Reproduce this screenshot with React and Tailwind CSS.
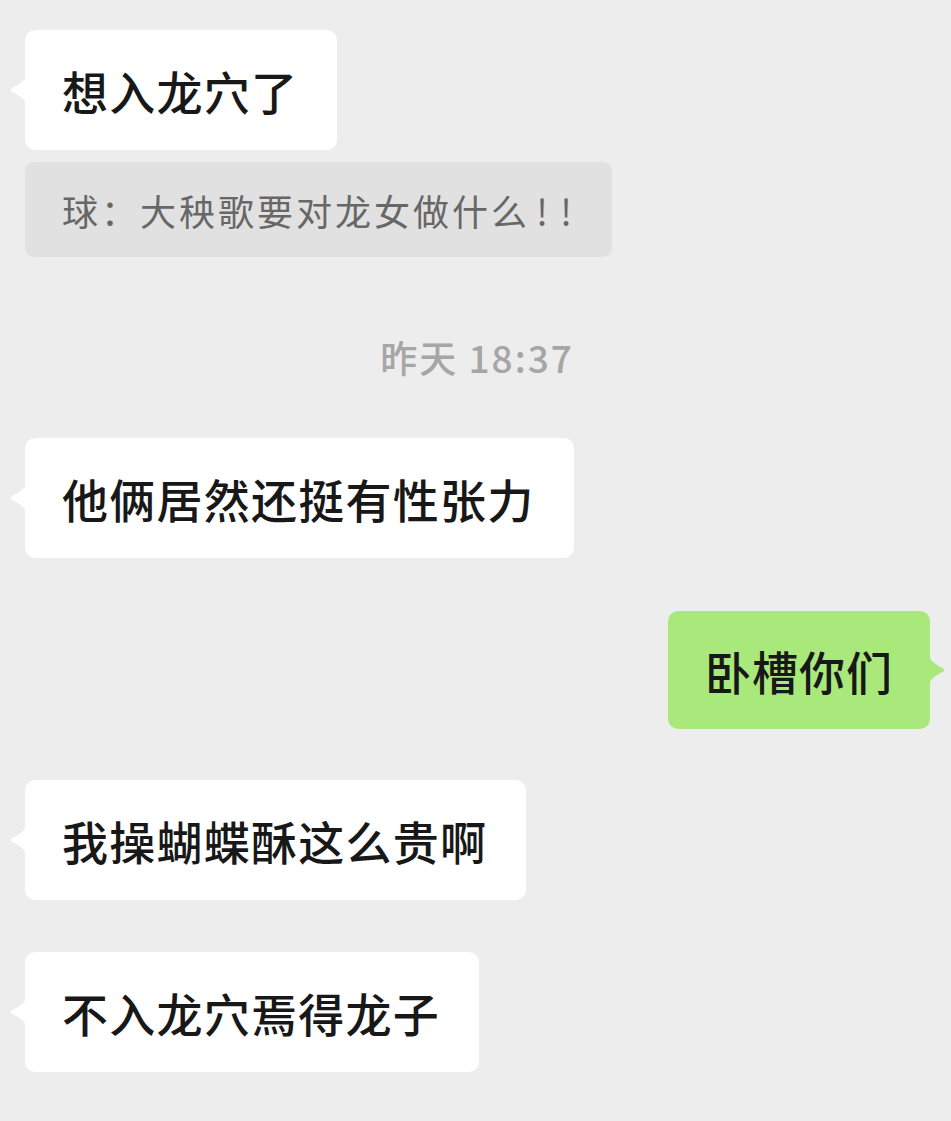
import React from "react";

const FONT = { fontFamily: '"Noto Sans CJK SC", "Noto Sans", sans-serif' };

function LeftTail({ color }) {
  return (
    <svg
      className="absolute left-[-15px] top-1/2 -translate-y-1/2"
      width="16"
      height="28"
      viewBox="0 0 16 28"
    >
      <path
        d="M16 0 C14 6 8 9 1.5 12.5 Q0 14 1.5 15.5 C8 19 14 22 16 28 Z"
        fill={color}
      />
    </svg>
  );
}

function RightTail({ color }) {
  return (
    <svg
      className="absolute right-[-15px] top-1/2 -translate-y-1/2"
      width="16"
      height="28"
      viewBox="0 0 16 28"
    >
      <path
        d="M0 0 C2 6 8 9 14.5 12.5 Q16 14 14.5 15.5 C8 19 2 22 0 28 Z"
        fill={color}
      />
    </svg>
  );
}

function LeftBubble({ text }) {
  return (
    <div className="flex">
      <div className="relative flex h-[120px] items-center rounded-[10px] bg-white pl-[37px] pr-[39px]">
        <LeftTail color="#ffffff" />
        <span className="text-[46px] font-medium leading-none tracking-[1.25px] text-[#181818]">
          {text}
        </span>
      </div>
    </div>
  );
}

export default function App() {
  return (
    <div
      className="min-h-[1121px] w-full bg-[#ededed] pl-[25px] pr-[21px] pt-[30px]"
      style={FONT}
    >
      <LeftBubble text="想入龙穴了" />
      <div className="mt-[12px] flex">
        <div className="flex h-[95px] items-center rounded-[9px] bg-[#e1e1e1] pl-[37px] pr-[34px]">
          <span className="text-[36px] leading-none tracking-[3px] text-[#676767]">
            球：大秧歌要对龙女做什么
          </span>
          <span className="inline-block w-[24px] text-center text-[36px] leading-none text-[#676767]">
            !
          </span>
          <span className="inline-block w-[24px] text-center text-[36px] leading-none text-[#676767]">
            !
          </span>
        </div>
      </div>
      <div className="mt-[78px] mb-[59px] flex h-[44px] items-center justify-center pr-[1px]">
        <span className="text-[37px] font-medium leading-none tracking-[2px] text-[#a6a6a6]">
          昨天 18:37
        </span>
      </div>
      <LeftBubble text="他俩居然还挺有性张力" />
      <div className="mt-[53px] flex justify-end">
        <div className="relative flex h-[118px] items-center rounded-[10px] bg-[#a9e97b] pl-[37px] pr-[37px]">
          <RightTail color="#a9e97b" />
          <span className="text-[46px] font-medium leading-none tracking-[1px] text-[#181818]">
            卧槽你们
          </span>
        </div>
      </div>
      <div className="mt-[51px]">
        <LeftBubble text="我操蝴蝶酥这么贵啊" />
      </div>
      <div className="mt-[52px]">
        <LeftBubble text="不入龙穴焉得龙子" />
      </div>
    </div>
  );
}
